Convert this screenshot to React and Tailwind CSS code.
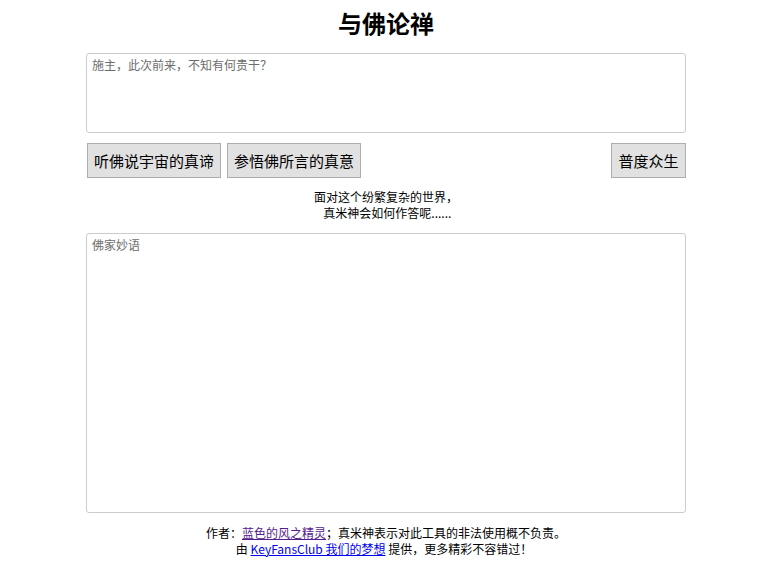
import React from "react";

export default function App() {
  const font = { fontFamily: '"Noto Sans CJK SC", "Liberation Sans", sans-serif' };
  return (
    <div className="min-h-[586px] bg-white pl-[12px] text-black" style={font}>
      <div className="mx-auto flex w-[600px] flex-col">
        <h1 className="pt-[7px] text-center text-[24px] font-bold leading-[32px]">与佛论禅</h1>
        <textarea
          className="mt-[14px] h-[80px] w-[600px] resize-none rounded-[3px] border border-[#cccccc] px-[5px] py-[3px] text-[12px] leading-[16px] placeholder:text-[#6d6d6d] outline-none"
          placeholder="施主，此次前来，不知有何贵干？"
        />
        <div className="mt-[10px] flex items-center">
          <button className="ml-[1px] h-[35px] w-[134px] border border-[#adadad] bg-[#e1e1e1] text-[15px] leading-[20px]">听佛说宇宙的真谛</button>
          <button className="ml-[6px] h-[35px] w-[134px] border border-[#adadad] bg-[#e1e1e1] text-[15px] leading-[20px]">参悟佛所言的真意</button>
          <button className="ml-auto h-[35px] w-[75px] border border-[#adadad] bg-[#e1e1e1] text-[15px] leading-[20px]">普度众生</button>
        </div>
        <div className="mt-[11px] text-center text-[12px] leading-[16px]">
          <div>面对这个纷繁复杂的世界，</div>
          <div>&nbsp;真米神会如何作答呢......</div>
        </div>
        <textarea
          className="mt-[12px] h-[280px] w-[600px] resize-none rounded-[3px] border border-[#cccccc] px-[5px] py-[3px] text-[12px] leading-[16px] placeholder:text-[#6d6d6d] outline-none"
          placeholder="佛家妙语"
        />
        <div className="mt-[12px] text-center text-[12px] leading-[16px]">
          <div>
            作者：<a href="#" className="text-[#551a8b] underline">蓝色的风之精灵</a>；真米神表示对此工具的非法使用概不负责。
          </div>
          <div className="-ml-[4px]">
            由 <a href="#" className="text-[#0000ee] underline">KeyFansClub 我们的梦想</a> 提供，更多精彩不容错过！
          </div>
        </div>
      </div>
    </div>
  );
}
